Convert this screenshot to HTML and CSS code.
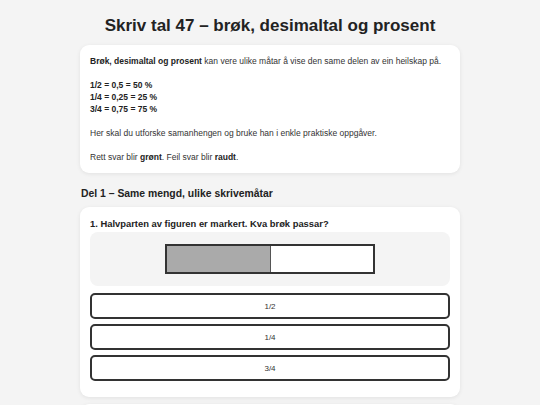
FILE: index.html
```html
<!DOCTYPE html>
<html lang="nn">
<head>
<meta charset="utf-8">
<title>Skriv tal 47</title>
<link rel="stylesheet" href="styles.css">
</head>
<body>
<main class="page">
  <h1 class="title">Skriv tal 47 – brøk, desimaltal og prosent</h1>

  <section class="card intro">
    <p><b>Brøk, desimaltal og prosent</b> kan vere ulike måtar å vise den same delen av ein heilskap på.</p>
    <p><b>1/2 = 0,5 = 50 %</b><br><b>1/4 = 0,25 = 25 %</b><br><b>3/4 = 0,75 = 75 %</b></p>
    <p>Her skal du utforske samanhengen og bruke han i enkle praktiske oppgåver.</p>
    <p>Rett svar blir <b>grønt</b>. Feil svar blir <b>raudt</b>.</p>
  </section>

  <h2 class="part">Del 1 – Same mengd, ulike skrivemåtar</h2>

  <section class="card question">
    <h3 class="q-title">1. Halvparten av figuren er markert. Kva brøk passar?</h3>
    <div class="figure">
      <div class="bar">
        <div class="seg filled"></div>
        <div class="seg"></div>
      </div>
    </div>
    <div class="options">
      <button class="opt">1/2</button>
      <button class="opt">1/4</button>
      <button class="opt">3/4</button>
    </div>
  </section>

  <section class="card question">
    <h3 class="q-title">2. Kva desimaltal er det same som 1/4?</h3>
    <div class="options">
      <button class="opt">0,25</button>
      <button class="opt">0,4</button>
      <button class="opt">0,75</button>
    </div>
  </section>
</main>
</body>
</html>
```

FILE: styles.css
```css
* { box-sizing: border-box; }

html, body {
  margin: 0;
  padding: 0;
  background: #f4f4f4;
}

body {
  font-family: "Liberation Sans", Arial, sans-serif;
  color: #222;
  font-size: 8.5px;
  line-height: 12px;
}

.page {
  width: 380px;
  margin: 0 auto;
  padding-top: 16px;
}

.title {
  margin: 0 0 9px;
  font-size: 17px;
  line-height: 20px;
  text-align: center;
  color: #222;
}

.card {
  background: #fff;
  border-radius: 9px;
  box-shadow: 0 1px 4px rgba(0, 0, 0, 0.08);
  padding: 10px;
  margin-bottom: 7px;
}

.intro p {
  margin: 0 0 12px;
  color: #333;
}

.intro p:last-child { margin-bottom: 0; }

.intro b { color: #222; }

.part {
  margin: 14px 0 7px 1px;
  font-size: 10.4px;
  line-height: 13px;
  color: #222;
}

.q-title {
  margin: 0 0 2px;
  font-size: 9.4px;
  line-height: 13px;
  color: #222;
}

.figure {
  background: #f4f4f4;
  border-radius: 8px;
  padding: 12px 0;
  display: flex;
  justify-content: center;
  margin-bottom: 7px;
}

.bar {
  width: 210px;
  height: 30px;
  border: 2px solid #333;
  display: flex;
}

.seg {
  flex: 1;
  background: #fff;
}

.seg.filled {
  background: #aaa;
  border-right: 1px solid #555;
}

.options {
  display: flex;
  flex-direction: column;
  gap: 5px;
  padding-bottom: 6px;
}

.opt {
  display: block;
  width: 100%;
  height: 26px;
  background: #fff;
  border: 2px solid #333;
  border-radius: 5px;
  font-family: "Liberation Sans", Arial, sans-serif;
  font-size: 8px;
  color: #333;
  padding: 0;
}
```
